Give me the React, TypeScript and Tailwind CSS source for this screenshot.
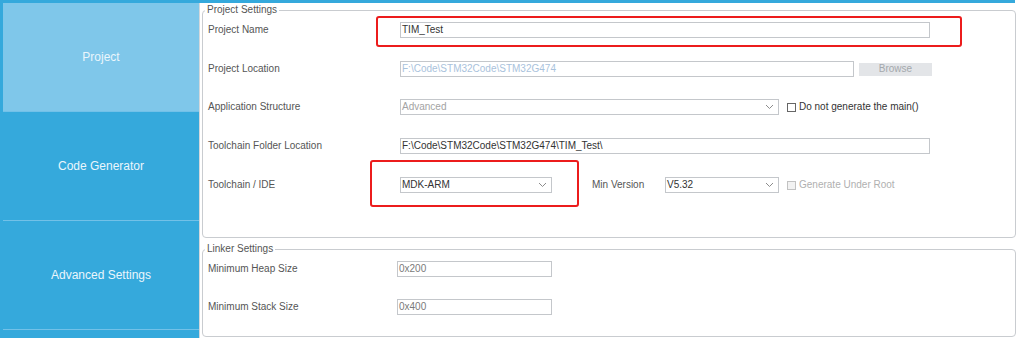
import React from 'react';

function Chevron() {
  return (
    <svg width="9" height="6" viewBox="0 0 9 6" className="shrink-0">
      <path d="M1 1 L4.5 4.5 L8 1" fill="none" stroke="#8c8c8c" strokeWidth="1" />
    </svg>
  );
}

function TextBox({ width, value, tone = 'normal' }: { width: string; value: string; tone?: 'normal' | 'disabled' | 'muted' }) {
  const color = tone === 'disabled' ? 'text-[#a9c2dc]' : tone === 'muted' ? 'text-[#7a7a7a]' : 'text-[#333333]';
  return (
    <div className={`${width} h-4 border border-[#c4c7cb] bg-white flex items-center pl-[1px] text-[10px] leading-none ${color}`}>
      {value}
    </div>
  );
}

function Select({ width, value, muted }: { width: string; value: string; muted?: boolean }) {
  return (
    <div className={`${width} h-4 border border-[#c4c7cb] bg-white flex items-center justify-between pl-[1px] pr-[4px] text-[10px] leading-none ${muted ? 'text-[#a3a3a3]' : 'text-[#333333]'}`}>
      <span>{value}</span>
      <Chevron />
    </div>
  );
}

function Check({ label, disabled }: { label: string; disabled?: boolean }) {
  return (
    <div className="flex items-center ml-[8px]">
      <div className={`w-[9px] h-[9px] border ${disabled ? 'border-[#c2c2c2] bg-[#f2f2f2]' : 'border-[#666666] bg-white'}`} />
      <span className={`ml-[3px] text-[10px] leading-none ${disabled ? 'text-[#b0b0b0]' : 'text-[#333333]'}`}>{label}</span>
    </div>
  );
}

function Label({ children, width = 'w-[192px]' }: { children: React.ReactNode; width?: string }) {
  return <div className={`${width} shrink-0 text-[10px] leading-none text-[#555555]`}>{children}</div>;
}

const tabs = ['Project', 'Code Generator', 'Advanced Settings'];

export default function App() {
  return (
    <div className="relative w-[1026px] h-[338px] overflow-hidden bg-white font-['Liberation_Sans',Arial,sans-serif]">
      {/* top strip */}
      <div className="w-[1015px] h-[3px] bg-[#35a9dc]" />

      <div className="flex h-[335px]">
        {/* Sidebar */}
        <div className="w-[200px] h-full shrink-0 bg-[#35a9dc] pl-[3px] border-r border-[#d3d7db]">
          {tabs.map((t, i) => (
            <div
              key={t}
              className={`h-[109px] border-b border-[#72c1e8] flex items-center justify-center text-[12px] text-[#eaf6fc] ${i === 0 ? 'bg-[#7fc7ea]' : 'bg-[#35a9dc]'}`}
            >
              {t}
            </div>
          ))}
        </div>

        {/* Main panel */}
        <div className="w-[816px] pl-[2px]">
          <fieldset className="mt-[1px] h-[234px] border border-[#c9ccd0] rounded-[4px] pl-[5px] pt-[6px]">
            <legend className="-ml-[3px] px-[2px] text-[10px] leading-[12px] text-[#555555]">Project Settings</legend>

            <div className="flex items-center h-4">
              <Label>Project Name</Label>
              <TextBox width="w-[530px]" value="TIM_Test" />
            </div>

            <div className="flex items-center h-4 mt-[23px]">
              <Label>Project Location</Label>
              <TextBox width="w-[454px]" value="F:\Code\STM32Code\STM32G474" tone="disabled" />
              <div className="ml-[5px] w-[73px] h-[13px] bg-[#e3e5e8] flex items-center justify-center text-[10px] leading-none text-[#a4a8ac]">
                Browse
              </div>
            </div>

            <div className="flex items-center h-4 mt-[22px]">
              <Label>Application Structure</Label>
              <Select width="w-[379px]" value="Advanced" muted />
              <Check label="Do not generate the main()" />
            </div>

            <div className="flex items-center h-4 mt-[23px]">
              <Label>Toolchain Folder Location</Label>
              <TextBox width="w-[530px]" value="F:\Code\STM32Code\STM32G474\TIM_Test\" />
            </div>

            <div className="flex items-center h-4 mt-[23px]">
              <Label>Toolchain / IDE</Label>
              <Select width="w-[152px]" value="MDK-ARM" />
              <div className="ml-[40px] w-[73px] text-[10px] leading-none text-[#555555]">Min Version</div>
              <Select width="w-[114px]" value="V5.32" />
              <Check label="Generate Under Root" disabled />
            </div>
          </fieldset>

          <fieldset className="mt-[5px] h-[94px] border border-[#c9ccd0] rounded-[4px] pl-[5px] pt-[6px]">
            <legend className="-ml-[3px] px-[2px] text-[10px] leading-[12px] text-[#555555]">Linker Settings</legend>

            <div className="flex items-center h-4">
              <Label width="w-[189px]">Minimum Heap Size</Label>
              <TextBox width="w-[155px]" value="0x200" tone="muted" />
            </div>

            <div className="flex items-center h-4 mt-[22px]">
              <Label width="w-[189px]">Minimum Stack Size</Label>
              <TextBox width="w-[155px]" value="0x400" tone="muted" />
            </div>
          </fieldset>
        </div>
      </div>

      {/* red highlight boxes */}
      <div className="absolute left-[376px] top-[16px] w-[586px] h-[31px] border-2 border-[#ec1c1c] rounded-[3px]" />
      <div className="absolute left-[370px] top-[160px] w-[209px] h-[47px] border-2 border-[#ec1c1c] rounded-[3px]" />
    </div>
  );
}
